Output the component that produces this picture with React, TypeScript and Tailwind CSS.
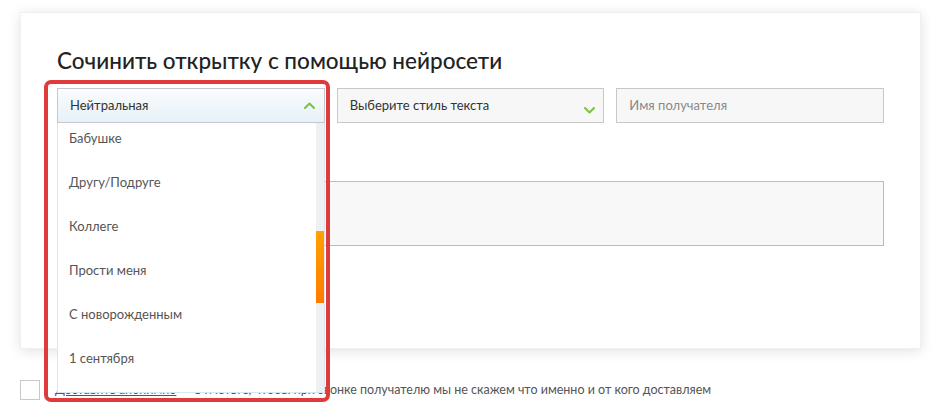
import React from 'react';

const options = ['Бабушке', 'Другу/Подруге', 'Коллеге', 'Прости меня', 'С новорожденным', '1 сентября', 'Маме'];

const Chevron = ({ up }: { up?: boolean }) => (
    <svg width="11" height="7" viewBox="0 0 11 7" className="shrink-0">
        <path
            d={up ? 'M1 6 L5.5 1.5 L10 6' : 'M1 1 L5.5 5.5 L10 1'}
            fill="none"
            stroke="#7cc242"
            strokeWidth="2"
            strokeLinecap="round"
            strokeLinejoin="round"
        />
    </svg>
);

const App: React.FC = () => {
    return (
        <div className="min-h-screen bg-white font-['Lato','Noto_Sans',sans-serif] text-[#333]">
            <div className="pt-3 px-5">
                <div className="w-[901px] h-[337px] bg-white border border-[#f0f0f0] shadow-[0_2px_12px_rgba(0,0,0,0.12)] pl-[36px] pr-[36px] pt-[33px]">
                    <h2 className="text-[22.5px] leading-[30px] font-medium text-[#222]">
                        Сочинить открытку с помощью нейросети
                    </h2>
                    <div className="grid grid-cols-3 gap-3 mt-[12px]">
                        {/* Selected: open dropdown */}
                        <div className="relative">
                            <div className="h-[35px] border border-[#c4c8cc] bg-gradient-to-b from-[#fbfcfd] to-[#e6f1f8] flex items-center justify-between pl-3 pr-[9px] text-[13px] text-[#333]">
                                <span>Нейтральная</span>
                                <Chevron up />
                            </div>
                            <div className="absolute left-0 top-full w-full h-[270px] bg-white border-x border-b border-[#dce6ee] flex z-10 overflow-hidden">
                                <div className="flex-1 overflow-hidden">
                                    <div className="-mt-[6px]">
                                        {options.map(o => (
                                            <div key={o} className="h-[44px] flex items-center pl-[11px] text-[13px] text-[#555]">
                                                {o}
                                            </div>
                                        ))}
                                    </div>
                                </div>
                                <div className="w-2 bg-[#eef0f2]">
                                    <div className="mt-[108px] h-[72px] bg-gradient-to-b from-[#ffa200] to-[#ff7a00]" />
                                </div>
                            </div>
                            {/* annotation highlight */}
                            <div className="absolute -left-[13px] -top-[8px] w-[286px] h-[322px] border-[4px] border-[#e03b3b] rounded-[7px] z-20 pointer-events-none" />
                        </div>
                        <div className="h-[35px] border border-[#c8c8c8] bg-[#f7f7f7] flex items-center justify-between pl-3 pr-[8px] text-[13px] text-[#333]">
                            <span>Выберите стиль текста</span>
                            <span className="mt-[9px]"><Chevron /></span>
                        </div>
                        <div className="h-[35px] border border-[#c8c8c8] bg-[#f7f7f7] flex items-center pl-3 text-[13px] text-[#888]">
                            Имя получателя
                        </div>
                    </div>
                    <div className="mt-[58px] h-[65px] border border-[#bcbcbc] bg-[#f8f8f8]" />
                </div>
            </div>
            <div className="flex items-center gap-[15px] pl-5 mt-[31px]">
                <div className="w-5 h-5 shrink-0 border border-[#c8c8c8] bg-white" />
                <p className="text-[12.5px] leading-[20px] text-[#555] whitespace-nowrap">
                    <span className="text-[#5b3cc4] underline">Доставить анонимно</span> — Отметьте, чтобы при звонке получателю мы не скажем что именно и от кого доставляем
                </p>
            </div>
        </div>
    );
};

export default App;
